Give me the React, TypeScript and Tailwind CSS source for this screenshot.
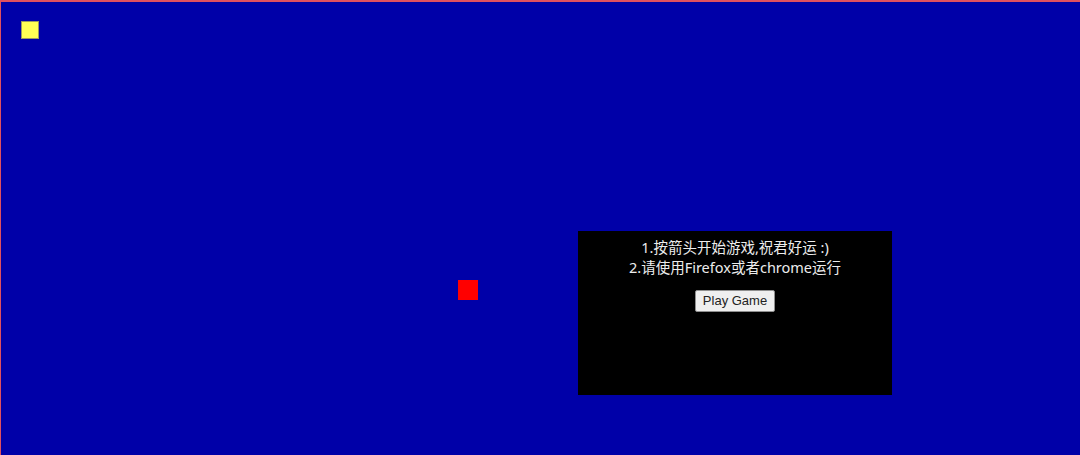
export default function App() {
  return (
    <div className="relative w-[1080px] h-[455px] overflow-hidden bg-[#0000a8] border-t-2 border-l border-[#e0505f]">
      {/* snake head / food on the board */}
      <div className="absolute left-[20px] top-[19px] w-[18px] h-[18px] bg-[#ffff55] border border-[#9a9a60]" />
      <div className="absolute left-[457px] top-[278px] w-[20px] h-[20px] bg-[#ff0000]" />

      <div className="absolute left-[577px] top-[229px] w-[314px] h-[164px] bg-black flex flex-col items-center pt-[6px] text-[14.5px] leading-[20px] text-[#ececec] font-['Noto_Sans','Noto_Sans_CJK_SC',sans-serif]">
        <p>1.按箭头开始游戏,祝君好运 :)</p>
        <p>2.请使用Firefox或者chrome运行</p>
        <button className="mt-[13px] h-[22px] px-[7px] bg-[#efefef] border border-[#8f8f8f] rounded-[2px] text-[13px] leading-[18px] text-[#222] font-['Liberation_Sans',sans-serif]">
          Play Game
        </button>
      </div>
    </div>
  );
}
